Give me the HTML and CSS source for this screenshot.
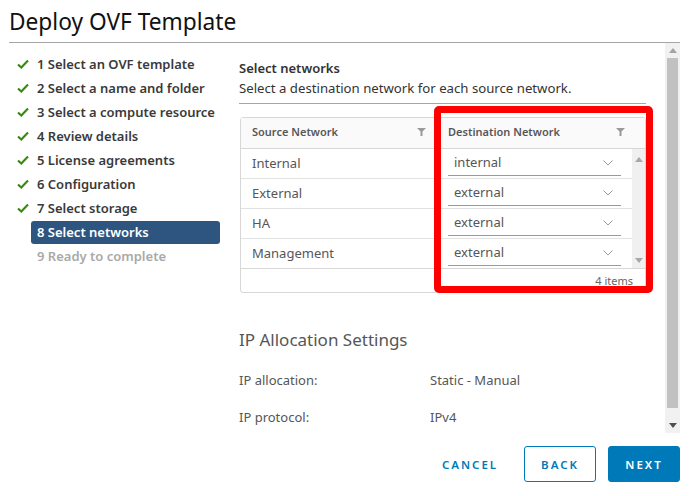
FILE: index.html
```html
<!DOCTYPE html>
<html>
<head>
<meta charset="utf-8">
<link rel="stylesheet" href="styles.css">
</head>
<body>
<div class="header"><h1 class="title">Deploy OVF Template</h1></div>
<div class="main">
  <ul class="nav">
    <li class="step done"><span class="ic"><svg width="12" height="10" viewBox="0 0 12 10"><path d="M1 5.5 L4.3 8.5 L11 1.5" fill="none" stroke="#3b8a12" stroke-width="2.2"/></svg></span><span class="lbl">1 Select an OVF template</span></li>
    <li class="step done"><span class="ic"><svg width="12" height="10" viewBox="0 0 12 10"><path d="M1 5.5 L4.3 8.5 L11 1.5" fill="none" stroke="#3b8a12" stroke-width="2.2"/></svg></span><span class="lbl">2 Select a name and folder</span></li>
    <li class="step done"><span class="ic"><svg width="12" height="10" viewBox="0 0 12 10"><path d="M1 5.5 L4.3 8.5 L11 1.5" fill="none" stroke="#3b8a12" stroke-width="2.2"/></svg></span><span class="lbl">3 Select a compute resource</span></li>
    <li class="step done"><span class="ic"><svg width="12" height="10" viewBox="0 0 12 10"><path d="M1 5.5 L4.3 8.5 L11 1.5" fill="none" stroke="#3b8a12" stroke-width="2.2"/></svg></span><span class="lbl">4 Review details</span></li>
    <li class="step done"><span class="ic"><svg width="12" height="10" viewBox="0 0 12 10"><path d="M1 5.5 L4.3 8.5 L11 1.5" fill="none" stroke="#3b8a12" stroke-width="2.2"/></svg></span><span class="lbl">5 License agreements</span></li>
    <li class="step done"><span class="ic"><svg width="12" height="10" viewBox="0 0 12 10"><path d="M1 5.5 L4.3 8.5 L11 1.5" fill="none" stroke="#3b8a12" stroke-width="2.2"/></svg></span><span class="lbl">6 Configuration</span></li>
    <li class="step done"><span class="ic"><svg width="12" height="10" viewBox="0 0 12 10"><path d="M1 5.5 L4.3 8.5 L11 1.5" fill="none" stroke="#3b8a12" stroke-width="2.2"/></svg></span><span class="lbl">7 Select storage</span></li>
    <li class="step active"><span class="ic"></span><span class="lbl">8 Select networks</span></li>
    <li class="step todo"><span class="ic"></span><span class="lbl">9 Ready to complete</span></li>
  </ul>
  <div class="content">
    <div class="sec-title">Select networks</div>
    <div class="sec-sub">Select a destination network for each source network.</div>
    <div class="grid-wrap">
      <div class="grid">
        <div class="ghead">
          <div class="hcell src">Source Network<svg class="filt" width="9" height="8" viewBox="0 0 9 8"><path d="M0 0 H9 L5.5 3.5 V8 H3.5 V3.5 Z" fill="#9a9a9a"/></svg></div>
          <div class="hcell dst">Destination Network<svg class="filt" width="9" height="8" viewBox="0 0 9 8"><path d="M0 0 H9 L5.5 3.5 V8 H3.5 V3.5 Z" fill="#9a9a9a"/></svg></div>
        </div>
        <div class="gbody">
          <div class="rows">
            <div class="row"><div class="cell src">Internal</div><div class="cell dst"><div class="sel">internal<svg class="chev" width="10" height="6" viewBox="0 0 10 6"><path d="M0.5 0.5 L5 5 L9.5 0.5" fill="none" stroke="#9a9a9a" stroke-width="1"/></svg></div></div></div>
            <div class="row"><div class="cell src">External</div><div class="cell dst"><div class="sel">external<svg class="chev" width="10" height="6" viewBox="0 0 10 6"><path d="M0.5 0.5 L5 5 L9.5 0.5" fill="none" stroke="#9a9a9a" stroke-width="1"/></svg></div></div></div>
            <div class="row"><div class="cell src">HA</div><div class="cell dst"><div class="sel">external<svg class="chev" width="10" height="6" viewBox="0 0 10 6"><path d="M0.5 0.5 L5 5 L9.5 0.5" fill="none" stroke="#9a9a9a" stroke-width="1"/></svg></div></div></div>
            <div class="row"><div class="cell src">Management</div><div class="cell dst"><div class="sel">external<svg class="chev" width="10" height="6" viewBox="0 0 10 6"><path d="M0.5 0.5 L5 5 L9.5 0.5" fill="none" stroke="#9a9a9a" stroke-width="1"/></svg></div></div></div>
          </div>
          <div class="iscroll">
            <svg width="8" height="5" viewBox="0 0 8 5"><path d="M0 5 L4 0 L8 5 Z" fill="#a8a8a8"/></svg>
            <svg width="8" height="5" viewBox="0 0 8 5"><path d="M0 0 L4 5 L8 0 Z" fill="#a8a8a8"/></svg>
          </div>
        </div>
        <div class="gfoot">4 items</div>
      </div>
      <div class="highlight"></div>
    </div>
    <div class="ip-title">IP Allocation Settings</div>
    <div class="ip-row"><span class="ip-k">IP allocation:</span><span class="ip-v">Static - Manual</span></div>
    <div class="ip-row"><span class="ip-k">IP protocol:</span><span class="ip-v">IPv4</span></div>
  </div>
  <div class="oscroll">
    <svg class="arr" width="8" height="5" viewBox="0 0 8 5"><path d="M0 5 L4 0 L8 5 Z" fill="#a3a3a3"/></svg>
    <div class="thumb"></div>
    <svg class="arr" width="8" height="5" viewBox="0 0 8 5"><path d="M0 0 L4 5 L8 0 Z" fill="#505050"/></svg>
  </div>
</div>
<div class="footer">
  <button class="btn flat">CANCEL</button>
  <button class="btn outline">BACK</button>
  <button class="btn primary">NEXT</button>
</div>
</body>
</html>
```
FILE: styles.css
```css
* { box-sizing: border-box; }
body {
  margin: 0;
  width: 691px;
  height: 496px;
  overflow: hidden;
  background: #fff;
  font-family: "Noto Sans", "Lato", sans-serif;
  color: #333;
}
.header { padding: 0 11px 0 9px; }
.title {
  margin: 0;
  height: 43px;
  padding-top: 7px;
  font-size: 22.7px;
  font-weight: 400;
  line-height: 30px;
  color: #111;
  border-bottom: 1px solid #a6a6a6;
}
.main {
  display: flex;
  height: 390px;
}
.nav {
  list-style: none;
  margin: 0;
  padding: 9px 0 0 0;
  width: 231px;
  flex: none;
}
.step {
  display: flex;
  height: 24px;
  align-items: center;
}
.step .ic {
  width: 31px;
  padding-left: 17px;
  display: flex;
  align-items: center;
}
.step .lbl {
  width: 189px;
  height: 23px;
  line-height: 23px;
  padding-left: 6px;
  font-size: 13px;
  font-weight: 600;
  color: #3a3a3a;
  border-radius: 3px;
  white-space: nowrap;
}
.step.active .lbl { background: #2e5580; color: #fff; }
.step.todo .lbl { color: #a9a9a9; }
.content {
  flex: 1;
  padding: 16px 19px 0 8px;
}
.sec-title {
  font-size: 13px;
  font-weight: 600;
  line-height: 18px;
  color: #333;
}
.sec-sub {
  margin-top: 1px;
  font-size: 13.2px;
  line-height: 20px;
  color: #333;
  padding-bottom: 5px;
  border-bottom: 1px solid #a6a6a6;
  white-space: nowrap;
}
.grid-wrap {
  position: relative;
  margin-top: 13px;
}
.grid {
  border: 1px solid #d7d7d7;
  border-radius: 3px;
  margin-left: 1px;
  height: 176px;
  display: flex;
  flex-direction: column;
}
.ghead {
  display: flex;
  height: 31px;
  flex: none;
  background: #fafafa;
  border-bottom: 1px solid #d7d7d7;
}
.hcell {
  display: flex;
  align-items: center;
  justify-content: space-between;
  padding-bottom: 3px !important;
  font-size: 11px;
  font-weight: 600;
  color: #575757;
}
.hcell.src { width: 196px; padding: 0 11px 0 11px; }
.hcell.dst { flex: 1; padding: 0 20px 0 11px; }
.filt { flex: none; }
.gbody {
  display: flex;
  flex: none;
  height: 120px;
  border-bottom: 1px solid #d7d7d7;
}
.rows { flex: 1; }
.row {
  display: flex;
  height: 30px;
  border-bottom: 1px solid #e2e2e2;
}
.row:last-child { border-bottom: none; height: 29px; }
.cell {
  font-size: 13px;
  color: #565656;
}
.cell.src {
  width: 196px;
  padding: 0 0 0 11px;
  line-height: 28px;
}
.cell.dst {
  flex: 1;
  padding: 0 11px 0 11px;
}
.sel {
  height: 27px;
  line-height: 25px;
  padding: 1px 6px 0;
  border-bottom: 1px solid #9a9a9a;
  display: flex;
  justify-content: space-between;
  align-items: center;
}
.chev { flex: none; margin-right: 2px; }
.iscroll {
  width: 13px;
  background: #f0f0f0;
  display: flex;
  flex-direction: column;
  justify-content: space-between;
  align-items: center;
  padding: 8px 0 5px;
}
.gfoot {
  flex: 1;
  min-height: 0;
  text-align: right;
  padding: 0 12px 0 0;
  font-size: 11px;
  line-height: 23px;
  color: #666;
}
.highlight {
  position: absolute;
  left: 195px;
  top: -11px;
  width: 219px;
  height: 187px;
  border: 7px solid #ff0000;
  border-radius: 5px;
}
.ip-title {
  margin-top: 36px;
  font-size: 17px;
  line-height: 22px;
  color: #565656;
}
.ip-row {
  display: flex;
  height: 37px;
  align-items: center;
  font-size: 13px;
  color: #565656;
}
.ip-title + .ip-row { margin-top: 10px; }
.ip-k { width: 191px; }
.oscroll {
  width: 15px;
  flex: none;
  margin-right: 11px;
  background: #f1f1f1;
  display: flex;
  flex-direction: column;
  align-items: center;
  padding-top: 5px;
}
.oscroll .arr { flex: none; }
.thumb {
  width: 11px;
  height: 350px;
  margin-top: 5px;
  background: #c1c1c1;
}
.oscroll .arr:last-child { margin-top: 15px; }
.footer {
  display: flex;
  justify-content: flex-end;
  padding: 13px 11px 0 0;
}
.btn {
  height: 36px;
  width: 72px;
  font-family: "Noto Sans", "Lato", sans-serif;
  font-size: 11.5px;
  font-weight: 600;
  letter-spacing: 2px;
  border-radius: 3px;
  cursor: pointer;
  padding: 0;
}
.btn.flat {
  background: none;
  border: none;
  color: #0079b8;
  width: 72px;
  margin-right: 18px;
}
.btn.outline {
  background: #fff;
  border: 1px solid #0079b8;
  color: #0079b8;
  margin-right: 12px;
}
.btn.primary {
  background: #0079b8;
  border: 1px solid #0079b8;
  color: #fff;
}
```
